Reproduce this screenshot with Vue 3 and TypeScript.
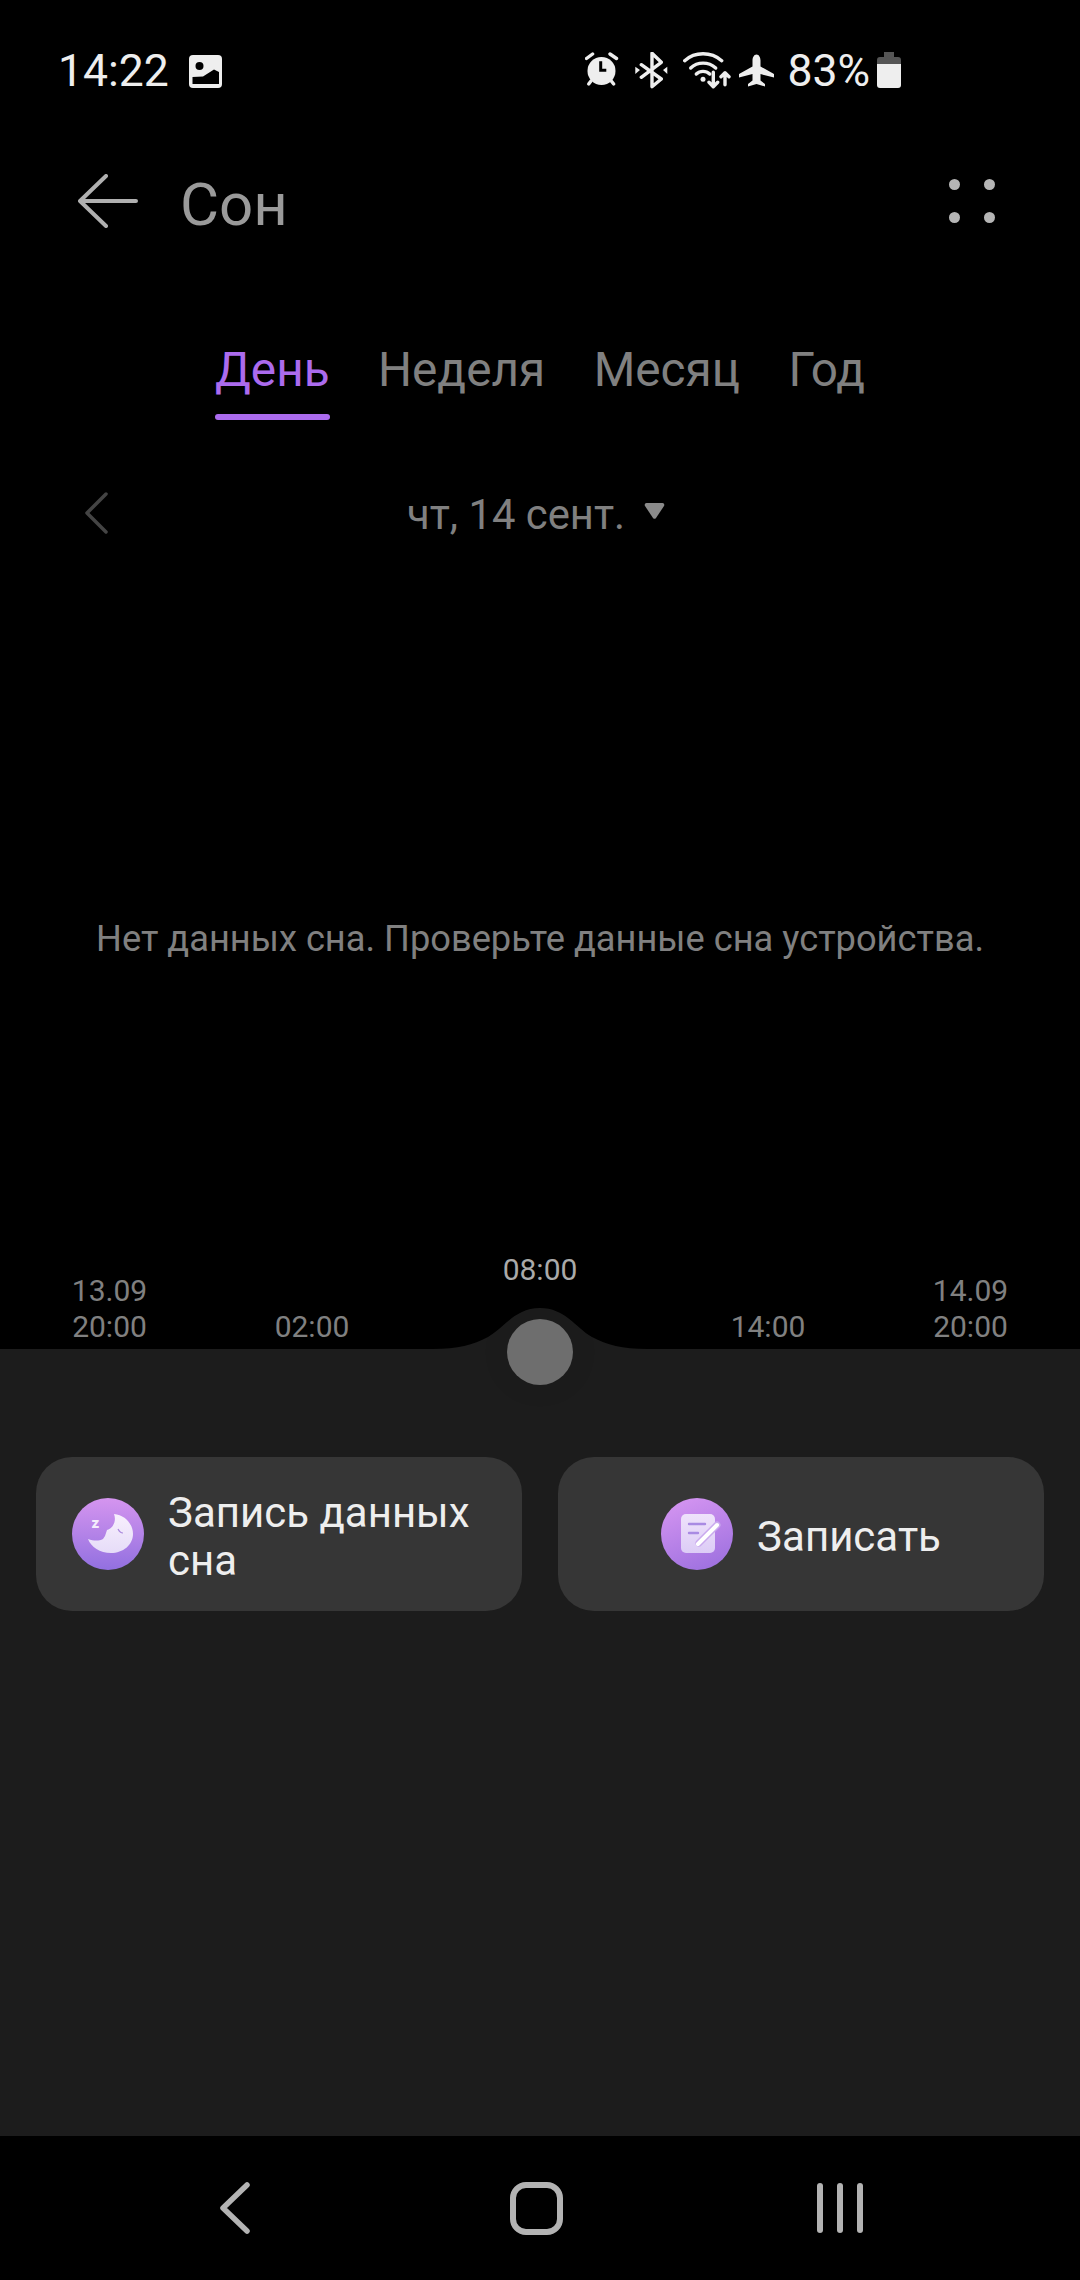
<script setup lang="ts">
import { ref } from 'vue'

const tabs = ['День', 'Неделя', 'Месяц', 'Год']
const activeTab = ref('День')

// подписи оси времени под графиком сна
const axisLabels = [
  { lines: ['13.09', '20:00'], current: false },
  { lines: ['02:00'], current: false },
  { lines: ['08:00'], current: true },
  { lines: ['14:00'], current: false },
  { lines: ['14.09', '20:00'], current: false }
]
</script>

<template>
  <div class="screen">
    <div class="status-bar">
      <div class="status-left">
        <span class="clock">14:22</span>
        <svg class="ic-image" width="33" height="33" viewBox="0 0 33 33">
          <rect width="33" height="33" rx="4" fill="#eee" />
          <circle cx="10.5" cy="11" r="4" fill="#000" />
          <path d="M3.5 29V22L14 21.5L25 14.5L30 17V29Z" fill="#000" />
        </svg>
      </div>
      <div class="status-right">
        <svg class="ic-alarm" width="34" height="36" viewBox="0 0 34 36">
          <circle cx="16.5" cy="19" r="14" fill="#eee" />
          <path d="M15.7 9.3V18.3H21.3" fill="none" stroke="#000" stroke-width="3" />
          <g stroke="#eee" stroke-width="3.4" stroke-linecap="round">
            <path d="M1.5 6.5L7.6 2" />
            <path d="M25 2L31.5 6.5" />
            <path d="M3.7 32L6 29" />
            <path d="M28.7 32L26.3 29" />
          </g>
        </svg>
        <svg class="ic-bt" width="33" height="37" viewBox="0 0 33 37">
          <path d="M6.3 12.7L26.3 27L17 34.7V1.3L26.3 10.3L6.3 25.3" fill="none" stroke="#eee" stroke-width="3.4" stroke-linejoin="round" stroke-linecap="round" />
          <path d="M.3 14.7L5 18L.3 22Z M32.3 14.7L28 18L32.3 22Z" fill="#eee" />
        </svg>
        <svg class="ic-wifi" width="48" height="37" viewBox="0 0 48 37">
          <g fill="none" stroke="#eee" stroke-width="3.4" stroke-linecap="round" stroke-linejoin="round">
            <path d="M1.7 8.7C12 -.5 28 -.5 38.7 8.7" />
            <path d="M7.7 16C14.5 9.5 25.5 9.5 32.7 16" />
            <path d="M13.3 22C17 18.5 23 18.5 26.7 22" />
            <path d="M30.3 20.3V34.5M26 30.3L30.3 34.7L34.7 30.3" />
            <path d="M42 21V32.7M38 24.7L42 20.7L46 24.7" />
          </g>
          <circle cx="20" cy="27.3" r="2.5" fill="#eee" />
        </svg>
        <svg class="ic-plane" width="35" height="33" viewBox="0 0 35 33">
          <path d="M17.5.5c2.5 0 4 3 4 6v6L35 20v3.5L21.5 20v6.5l4.5 3.500v2.500L17.500 30L9 32.500V30l4.500-3.500V20L0 23.500V20L13.500 12.500v-6c0-3 1.500-6 4-6z" fill="#eee" />
        </svg>
        <span class="battery-text">83%</span>
        <svg class="ic-battery" width="24" height="36" viewBox="0 0 24 36">
          <path d="M7 0H17V5H21A3 3 0 0 1 24 8V12H0V8A3 3 0 0 1 3 5H7Z" fill="#555" />
          <path d="M0 12H24V33A3 3 0 0 1 21 36H3A3 3 0 0 1 0 33Z" fill="#eee" />
        </svg>
      </div>
    </div>

    <header class="app-header">
      <svg class="back-arrow" width="60" height="54" viewBox="0 0 60 54">
        <path d="M58 27H2M28 2L2 27L28 52" fill="none" stroke="#b0b0b0" stroke-width="4" stroke-linecap="round" stroke-linejoin="round" />
      </svg>
      <h1 class="title">Сон</h1>
      <div class="more-dots">
        <i></i><i></i><i></i><i></i>
      </div>
    </header>

    <nav class="tabs">
      <div
        v-for="tab in tabs"
        :key="tab"
        class="tab"
        :class="{ active: tab === activeTab }"
      >
        {{ tab }}
      </div>
    </nav>

    <div class="date-row">
      <svg class="date-prev" width="24" height="42" viewBox="0 0 24 42">
        <path d="M22 2L3 21L22 40" fill="none" stroke="#444" stroke-width="3.500" stroke-linecap="round" stroke-linejoin="round" />
      </svg>
      <span class="date-text">чт, 14 сент.</span>
      <svg class="date-caret" width="21" height="16" viewBox="0 0 21 16">
        <path d="M2.500 0H18.500A2 2 0 0 1 20 3L12 15A2 2 0 0 1 9 15L1 3A2 2 0 0 1 2.500 0Z" fill="#8a8a8a" />
      </svg>
    </div>

    <div class="empty-area">
      <p class="empty-text">Нет данных сна. Проверьте данные сна устройства.</p>
    </div>

    <div class="axis">
      <div
        v-for="(label, i) in axisLabels"
        :key="i"
        class="axis-label"
        :class="{ current: label.current }"
      >
        <div v-for="line in label.lines" :key="line">{{ line }}</div>
      </div>
    </div>

    <section class="sheet">
      <svg class="bump" width="214" height="42" viewBox="0 0 214 42">
        <path d="M0 41C25 41 40 37 55 29C72 19 82 0 107 0C132 0 142 19 159 29C174 37 189 41 214 41V42H0Z" fill="#1c1c1c" />
      </svg>
      <div class="knob"></div>

      <div class="actions">
        <button class="action">
          <svg class="action-icon" width="72" height="72" viewBox="0 0 72 72">
            <defs>
              <linearGradient id="sleepBg" x1="0" y1="0" x2="0" y2="1">
                <stop offset="0" stop-color="#d595ef" />
                <stop offset="1" stop-color="#9270e0" />
              </linearGradient>
              <linearGradient id="moonFill" x1="0" y1="0" x2="0" y2="1">
                <stop offset="0" stop-color="#f8f0fd" />
                <stop offset="1" stop-color="#e6dcf8" />
              </linearGradient>
            </defs>
            <circle cx="36" cy="36" r="36" fill="url(#sleepBg)" />
            <path d="M42 16C53 17 61 26 61 36C61 47 51 55 39 55C28 55 19 49 16 41C22 43 27 43 31 41L33 38L35 32C40 31 45 24 42 16Z" fill="url(#moonFill)" />
            <path d="M46 31C47 33 49 35 51 35" fill="none" stroke="#a987dc" stroke-width="1.200" />
            <text x="19.500" y="30" class="zzz">z</text>
          </svg>
          <span class="action-label">Запись данных сна</span>
        </button>
        <button class="action center">
          <svg class="action-icon" width="72" height="72" viewBox="0 0 72 72">
            <defs>
              <linearGradient id="noteBg" x1="0.200" y1="0" x2="0.600" y2="1">
                <stop offset="0" stop-color="#d595f1" />
                <stop offset="1" stop-color="#a072e0" />
              </linearGradient>
              <linearGradient id="noteFill" x1="0" y1="0" x2="0" y2="1">
                <stop offset="0" stop-color="#efe2fb" />
                <stop offset="1" stop-color="#dcccf6" />
              </linearGradient>
            </defs>
            <circle cx="36" cy="36" r="36" fill="url(#noteBg)" />
            <rect x="20" y="16" width="34" height="39" rx="5" fill="url(#noteFill)" />
            <path d="M28 26H44M28 35H37" stroke="#a98ae3" stroke-width="2.400" stroke-linecap="round" />
            <path d="M38 45L56 27" stroke="#c9a9ee" stroke-width="7" stroke-linecap="round" />
            <path d="M37 46L56 27" stroke="#fff" stroke-width="4" stroke-linecap="round" />
          </svg>
          <span class="action-label">Записать</span>
        </button>
      </div>
    </section>

    <footer class="nav-bar">
      <svg width="30" height="52" viewBox="0 0 30 52">
        <path d="M27 3L3 26L27 49" fill="none" stroke="#b3b3b3" stroke-width="5.500" stroke-linecap="round" stroke-linejoin="round" />
      </svg>
      <div class="nav-home"></div>
      <div class="nav-recents"><i></i><i></i><i></i></div>
    </footer>
  </div>
</template>

<style scoped>
.screen {
  width: 1080px;
  height: 2280px;
  display: flex;
  flex-direction: column;
  background: #000;
  font-family: Roboto, "Noto Sans", sans-serif;
  overflow: hidden;
}

.status-bar {
  height: 100px;
  padding: 40px 179px 0 58px;
  box-sizing: border-box;
  display: flex;
  justify-content: space-between;
  align-items: center;
  color: #eee;
}

.status-left,
.status-right {
  display: flex;
  align-items: center;
}

.clock {
  font-size: 44.5px;
  line-height: 60px;
  margin-top: 1px;
  margin-right: 20px;
}

.ic-image {
  margin-top: 2px;
}

.status-right svg {
  flex: none;
}

.ic-alarm {
  margin-left: 1px;
}

.ic-bt {
  margin-left: 16px;
}

.ic-wifi {
  margin-left: 15px;
}

.ic-plane {
  margin-left: 8px;
}

.battery-text {
  font-size: 44.5px;
  line-height: 60px;
  margin-top: 1px;
  margin-left: 13px;
  margin-right: 7px;
}

.app-header {
  height: 202px;
  padding: 0 85px 0 78px;
  box-sizing: border-box;
  display: flex;
  align-items: center;
}

.back-arrow {
  margin-right: 42px;
}

.title {
  flex: 1;
  margin: 6px 0 0;
  font-size: 60px;
  font-weight: 400;
  color: #9a9a9a;
}

.more-dots {
  display: grid;
  grid-template-columns: 11px 11px;
  gap: 22px 24px;
}

.more-dots i {
  width: 11px;
  height: 11px;
  border-radius: 50%;
  background: #b5b5b5;
}

.tabs {
  height: 118px;
  display: flex;
  justify-content: center;
  gap: 48.5px;
}

.tab {
  height: 118px;
  box-sizing: border-box;
  padding-top: 36px;
  font-size: 47.7px;
  line-height: 64px;
  color: #808080;
  position: relative;
}

.tab.active {
  color: #ab6bee;
}

.tab.active::after {
  content: "";
  position: absolute;
  left: 0;
  right: 0;
  top: 112px;
  height: 6px;
  border-radius: 3px;
  background: #ab6bee;
}

.date-row {
  height: 186px;
  padding-left: 84px;
  box-sizing: border-box;
  display: flex;
  align-items: center;
}

.date-prev {
  margin-right: 299px;
}

.date-text {
  font-size: 41.8px;
  margin-top: 2px;
  color: #808080;
}

.date-caret {
  margin-left: 19px;
  margin-bottom: 4px;
}

.empty-area {
  flex: 1;
  padding-top: 308px;
  box-sizing: border-box;
}

.empty-text {
  margin: 0;
  text-align: center;
  font-size: 36.25px;
  line-height: 50px;
  color: #808080;
}

.axis {
  display: grid;
  grid-template-columns: 190px 215px 241px 215px 190px;
  justify-content: center;
  align-items: end;
  padding-bottom: 4px;
  font-size: 30px;
  line-height: 36px;
  text-align: center;
  color: #808080;
}

.axis-label.current {
  margin-bottom: 57px;
  color: #aaa;
}

.sheet {
  height: 787px;
  flex: none;
  padding: 108px 36px 0;
  box-sizing: border-box;
  background: #1c1c1c;
  position: relative;
}

.bump {
  position: absolute;
  left: 433px;
  top: -41px;
}

.knob {
  position: absolute;
  left: 507px;
  top: -30px;
  width: 66px;
  height: 66px;
  border-radius: 50%;
  background: #6e6e6e;
  box-shadow: 0 0 30px rgba(0, 0, 0, 0.08);
}

.actions {
  display: grid;
  grid-template-columns: 1fr 1fr;
  gap: 36px;
}

.action {
  height: 154px;
  padding: 0 36px;
  box-sizing: border-box;
  display: flex;
  align-items: center;
  gap: 24px;
  border: 0;
  border-radius: 36px;
  background: #363636;
  color: #eee;
  font-family: inherit;
  font-size: 42px;
  line-height: 48px;
  text-align: left;
}

.action.center {
  justify-content: center;
}

.action-icon {
  flex: none;
}

.action-label {
  padding-top: 5px;
}

.zzz {
  font-family: Roboto, sans-serif;
  font-size: 15px;
  font-weight: 900;
  fill: #f4ecfc;
}

.nav-bar {
  height: 144px;
  flex: none;
  display: flex;
  align-items: center;
  padding-left: 220px;
}

.nav-home {
  width: 41px;
  height: 41px;
  margin-left: 260px;
  border: 6px solid #b3b3b3;
  border-radius: 16px;
}

.nav-recents {
  display: flex;
  gap: 14px;
  margin-left: 254px;
}

.nav-recents i {
  width: 6px;
  height: 50px;
  border-radius: 3px;
  background: #b3b3b3;
}
</style>

<style>
html,
body {
  margin: 0;
  background: #000;
}
</style>
